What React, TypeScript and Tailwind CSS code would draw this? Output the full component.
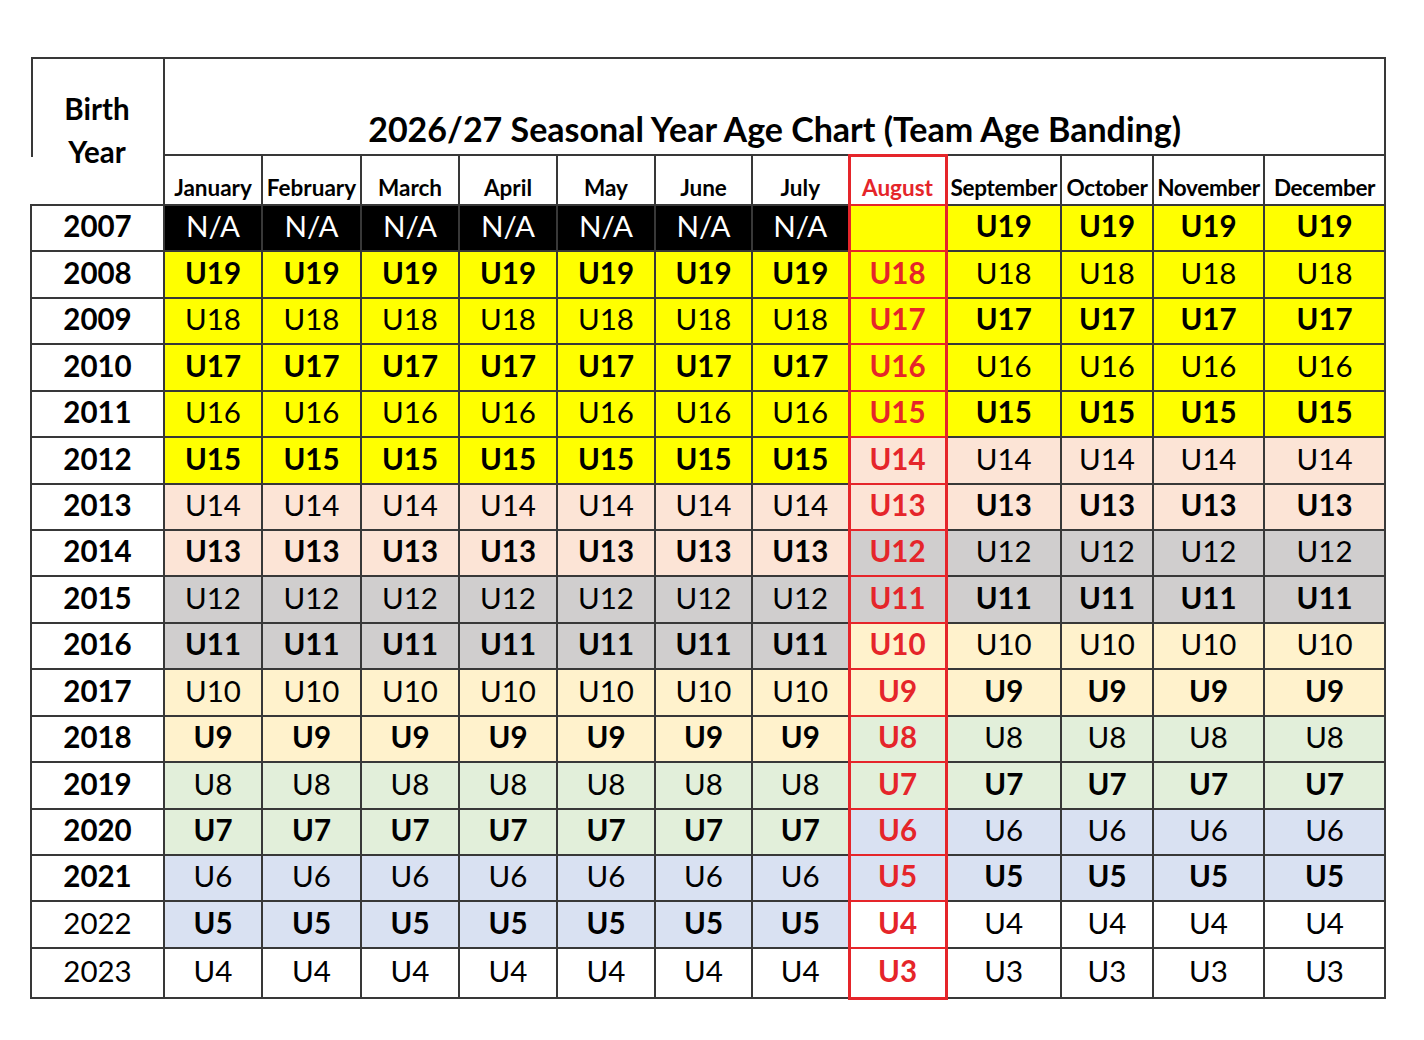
import React from 'react'

type Band = 'yellow' | 'pink' | 'gray' | 'cream' | 'green' | 'blue' | 'white' | 'black'

const BG: Record<Band, string> = {
    yellow: 'bg-[#ffff00]',
    pink: 'bg-[#fce4d6]',
    gray: 'bg-[#d0cece]',
    cream: 'bg-[#fff2cc]',
    green: 'bg-[#e2efda]',
    blue: 'bg-[#d9e1f2]',
    white: 'bg-white',
    black: 'bg-black',
}

const EARLY = ['January', 'February', 'March', 'April', 'May', 'June', 'July']
const LATE = ['September', 'October', 'November', 'December']
const COL_WIDTHS = ['w-[133px]', 'w-[98px]', 'w-[99px]', 'w-[98px]', 'w-[98px]', 'w-[98px]', 'w-[97px]', 'w-[97px]', 'w-[97px]', 'w-[115px]', 'w-[92px]', 'w-[111px]', 'w-[121px]']

interface Row {
    year: number
    yearBold: boolean
    h: string
    early: string
    earlyBold: boolean
    earlyBg: Band
    aug: string
    late: string
    lateBold: boolean
    lateBg: Band
}

const ROWS: Row[] = [
    { year: 2007, yearBold: true, h: 'h-[46px]', early: 'N/A', earlyBold: false, earlyBg: 'black', aug: '', late: 'U19', lateBold: true, lateBg: 'yellow' },
    { year: 2008, yearBold: true, h: 'h-[47px]', early: 'U19', earlyBold: true, earlyBg: 'yellow', aug: 'U18', late: 'U18', lateBold: false, lateBg: 'yellow' },
    { year: 2009, yearBold: true, h: 'h-[46px]', early: 'U18', earlyBold: false, earlyBg: 'yellow', aug: 'U17', late: 'U17', lateBold: true, lateBg: 'yellow' },
    { year: 2010, yearBold: true, h: 'h-[47px]', early: 'U17', earlyBold: true, earlyBg: 'yellow', aug: 'U16', late: 'U16', lateBold: false, lateBg: 'yellow' },
    { year: 2011, yearBold: true, h: 'h-[46px]', early: 'U16', earlyBold: false, earlyBg: 'yellow', aug: 'U15', late: 'U15', lateBold: true, lateBg: 'yellow' },
    { year: 2012, yearBold: true, h: 'h-[47px]', early: 'U15', earlyBold: true, earlyBg: 'yellow', aug: 'U14', late: 'U14', lateBold: false, lateBg: 'pink' },
    { year: 2013, yearBold: true, h: 'h-[46px]', early: 'U14', earlyBold: false, earlyBg: 'pink', aug: 'U13', late: 'U13', lateBold: true, lateBg: 'pink' },
    { year: 2014, yearBold: true, h: 'h-[46px]', early: 'U13', earlyBold: true, earlyBg: 'pink', aug: 'U12', late: 'U12', lateBold: false, lateBg: 'gray' },
    { year: 2015, yearBold: true, h: 'h-[47px]', early: 'U12', earlyBold: false, earlyBg: 'gray', aug: 'U11', late: 'U11', lateBold: true, lateBg: 'gray' },
    { year: 2016, yearBold: true, h: 'h-[46px]', early: 'U11', earlyBold: true, earlyBg: 'gray', aug: 'U10', late: 'U10', lateBold: false, lateBg: 'cream' },
    { year: 2017, yearBold: true, h: 'h-[47px]', early: 'U10', earlyBold: false, earlyBg: 'cream', aug: 'U9', late: 'U9', lateBold: true, lateBg: 'cream' },
    { year: 2018, yearBold: true, h: 'h-[46px]', early: 'U9', earlyBold: true, earlyBg: 'cream', aug: 'U8', late: 'U8', lateBold: false, lateBg: 'green' },
    { year: 2019, yearBold: true, h: 'h-[47px]', early: 'U8', earlyBold: false, earlyBg: 'green', aug: 'U7', late: 'U7', lateBold: true, lateBg: 'green' },
    { year: 2020, yearBold: true, h: 'h-[46px]', early: 'U7', earlyBold: true, earlyBg: 'green', aug: 'U6', late: 'U6', lateBold: false, lateBg: 'blue' },
    { year: 2021, yearBold: true, h: 'h-[46px]', early: 'U6', earlyBold: false, earlyBg: 'blue', aug: 'U5', late: 'U5', lateBold: true, lateBg: 'blue' },
    { year: 2022, yearBold: false, h: 'h-[47px]', early: 'U5', earlyBold: true, earlyBg: 'blue', aug: 'U4', late: 'U4', lateBold: false, lateBg: 'white' },
    { year: 2023, yearBold: false, h: 'h-[50px]', early: 'U4', earlyBold: false, earlyBg: 'white', aug: 'U3', late: 'U3', lateBold: false, lateBg: 'white' },
]

const cell = 'border-2 border-[#383838] p-0 text-center align-middle whitespace-nowrap'
const augCell = 'border-y-2 border-x-[3px] border-[#e5252a] p-0 text-center align-middle'

export default function App() {
    return (
        <div className="min-h-[1040px] bg-white pl-[30px] pt-[57px] font-['Lato',sans-serif] text-black">
            <table className="w-[1354px] table-fixed border-collapse">
                <colgroup>
                    {COL_WIDTHS.map((w, i) => (
                        <col key={i} className={w} />
                    ))}
                </colgroup>
                <thead>
                    <tr>
                        <th
                            rowSpan={2}
                            className="border-y-2 border-r-2 border-l-0 border-[#383838] bg-[linear-gradient(#383838,#383838)] bg-[length:2px_98px] bg-left-top bg-no-repeat p-0 pb-[4px] text-center align-middle text-[29.5px] leading-[43px] font-bold"
                        >
                            Birth
                            <br />
                            Year
                        </th>
                        <th colSpan={12} className="h-[97px] border-2 border-[#383838] p-0 pb-[5px] text-center align-bottom text-[34px] leading-[40px] font-bold">
                            2026/27 Seasonal Year Age Chart (Team Age Banding)
                        </th>
                    </tr>
                    <tr className="text-[22.5px] leading-[28px] font-bold">
                        {EARLY.map(m => (
                            <th key={m} className={`h-[50px] ${cell} pb-[2px] !align-bottom`}>{m}</th>
                        ))}
                        <th className="h-[50px] border-x-[3px] border-t-[3px] border-b-2 border-[#e5252a] p-0 pb-[2px] text-center align-bottom text-[#e5252a]">August</th>
                        {LATE.map(m => (
                            <th key={m} className={`h-[50px] ${cell} pb-[2px] !align-bottom tracking-[-0.3px]`}>{m}</th>
                        ))}
                    </tr>
                </thead>
                <tbody className="text-[29.5px] leading-[32px]">
                    {ROWS.map((r, idx) => (
                        <tr key={r.year}>
                            <td className={`${r.h} ${cell} pb-[4px] ${r.yearBold ? 'font-bold' : 'font-normal'}`}>{r.year}</td>
                            {EARLY.map(m => (
                                <td
                                    key={m}
                                    className={`${cell} pb-[4px] ${BG[r.earlyBg]} ${r.earlyBold ? 'font-bold' : 'font-normal'} ${r.earlyBg === 'black' ? 'text-white' : ''}`}
                                >
                                    {r.early}
                                </td>
                            ))}
                            <td className={`${augCell} pb-[4px] ${BG[r.lateBg]} font-bold text-[#e5252a] ${idx === ROWS.length - 1 ? '!border-b-[3px]' : ''}`}>
                                {r.aug}
                            </td>
                            {LATE.map(m => (
                                <td key={m} className={`${cell} pb-[4px] ${BG[r.lateBg]} ${r.lateBold ? 'font-bold' : 'font-normal'}`}>
                                    {r.late}
                                </td>
                            ))}
                        </tr>
                    ))}
                </tbody>
            </table>
        </div>
    )
}
